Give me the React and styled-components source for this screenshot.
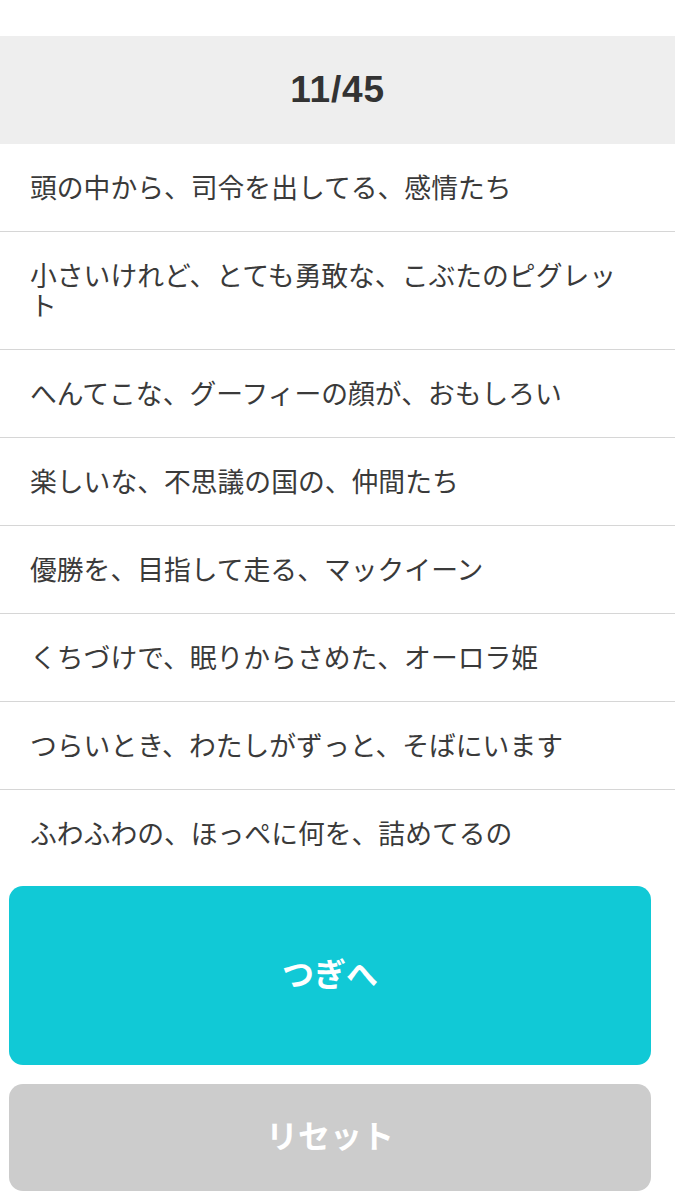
import styled, { createGlobalStyle } from 'styled-components'

const GlobalStyle = createGlobalStyle`
  body {
    margin: 0;
    background: #ffffff;
    font-family: "Noto Sans CJK JP", "Liberation Sans", sans-serif;
    color: #333333;
  }
`

const Page = styled('main')`
  display: flex;
  flex-direction: column;
  padding-top: 36px;
  width: 675px;
  height: 1200px;
  overflow: hidden;
`

const Counter = styled('header')`
  display: flex;
  align-items: center;
  justify-content: center;
  height: 108px;
  background-color: #eeeeee;
  font-family: "Liberation Sans", "Noto Sans CJK JP", sans-serif;
  font-size: 37px;
  font-weight: 700;
  letter-spacing: 0.8px;
  color: #333333;
`

const PhraseList = styled('ul')`
  list-style: none;
  margin: 0;
  padding: 0;
`

const PhraseItem = styled('li')`
  padding: 28px 40px 29px 30px;
  font-size: 26.8px;
  line-height: 30px;
  color: #3a3a3a;
  border-bottom: 1px solid #d6d6d6;

  &:last-child {
    border-bottom: none;
  }
`

const Actions = styled('div')`
  display: flex;
  flex-direction: column;
  gap: 19px;
  padding: 9px 24px 0 9px;
`

const ActionButton = styled('button')`
  height: ${({ $tall }) => ($tall ? '179px' : '107px')};
  padding: 0 0 8px;
  border: none;
  border-radius: 14px;
  background-color: ${({ $variant }) => ($variant === 'next' ? '#11c9d6' : '#cccccc')};
  color: #ffffff;
  font-family: "Noto Sans CJK JP", sans-serif;
  font-size: 32px;
  font-weight: 700;
  cursor: pointer;
`

const phrases = [
  '頭の中から、司令を出してる、感情たち',
  '小さいけれど、とても勇敢な、こぶたのピグレット',
  'へんてこな、グーフィーの顔が、おもしろい',
  '楽しいな、不思議の国の、仲間たち',
  '優勝を、目指して走る、マックイーン',
  'くちづけで、眠りからさめた、オーロラ姫',
  'つらいとき、わたしがずっと、そばにいます',
  'ふわふわの、ほっぺに何を、詰めてるの',
]

const App = () => {
  return (
    <Page>
      <GlobalStyle />
      <Counter>11/45</Counter>
      <PhraseList>
        {phrases.map((text) => (
          <PhraseItem key={text}>{text}</PhraseItem>
        ))}
      </PhraseList>
      <Actions>
        <ActionButton $variant='next' $tall>つぎへ</ActionButton>
        <ActionButton $variant='reset'>リセット</ActionButton>
      </Actions>
    </Page>
  )
}

export default App
